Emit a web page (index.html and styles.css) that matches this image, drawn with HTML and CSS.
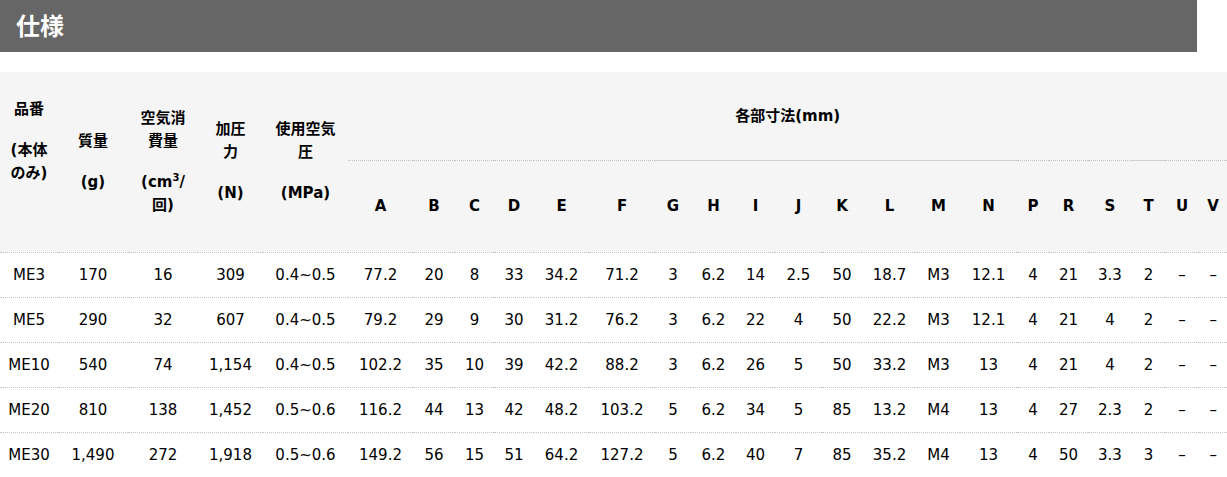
FILE: index.html
```html
<!DOCTYPE html>
<html lang="ja">
<head>
<meta charset="utf-8">
<title>仕様</title>
<link rel="stylesheet" href="styles.css">
</head>
<body>
<h2 class="title">仕様</h2>
<table class="spec">
  <colgroup>
    <col style="width:58px"><col style="width:70px"><col style="width:70px"><col style="width:65px"><col style="width:85px">
    <col style="width:65px"><col style="width:42px"><col style="width:39px"><col style="width:40px"><col style="width:55px">
    <col style="width:66px"><col style="width:36px"><col style="width:45px"><col style="width:39px"><col style="width:47px">
    <col style="width:40px"><col style="width:55px"><col style="width:43px"><col style="width:57px"><col style="width:32px">
    <col style="width:39px"><col style="width:44px"><col style="width:33px"><col style="width:34px"><col style="width:28px">
  </colgroup>
  <thead>
    <tr class="h1">
      <th rowspan="2" class="lead shift"><div class="nm">品番</div><div class="un">(本体<br>のみ)</div></th>
      <th rowspan="2" class="lead"><div class="nm">質量</div><div class="un">(g)</div></th>
      <th rowspan="2" class="lead"><div class="nm">空気消<br>費量</div><div class="un">(cm<sup>3</sup>/<br>回)</div></th>
      <th rowspan="2" class="lead"><div class="nm">加圧<br>力</div><div class="un">(N)</div></th>
      <th rowspan="2" class="lead"><div class="nm">使用空気<br>圧</div><div class="un">(MPa)</div></th>
      <th colspan="20" class="group">各部寸法(mm)</th>
    </tr>
    <tr class="h2">
      <th>A</th><th>B</th><th>C</th><th>D</th><th>E</th><th>F</th>
      <th class="solid">G</th><th class="solid">H</th><th class="solid">I</th><th class="solid">J</th>
      <th class="solid">K</th><th class="solid">L</th><th class="solid">M</th><th class="solid">N</th>
      <th>P</th><th>R</th><th>S</th><th class="solid">T</th><th>U</th><th>V</th>
    </tr>
  </thead>
  <tbody>
    <tr><td>ME3</td><td>170</td><td>16</td><td>309</td><td>0.4~0.5</td><td>77.2</td><td>20</td><td>8</td><td>33</td><td>34.2</td><td>71.2</td><td>3</td><td>6.2</td><td>14</td><td>2.5</td><td>50</td><td>18.7</td><td>M3</td><td>12.1</td><td>4</td><td>21</td><td>3.3</td><td>2</td><td>–</td><td>–</td></tr>
    <tr><td>ME5</td><td>290</td><td>32</td><td>607</td><td>0.4~0.5</td><td>79.2</td><td>29</td><td>9</td><td>30</td><td>31.2</td><td>76.2</td><td>3</td><td>6.2</td><td>22</td><td>4</td><td>50</td><td>22.2</td><td>M3</td><td>12.1</td><td>4</td><td>21</td><td>4</td><td>2</td><td>–</td><td>–</td></tr>
    <tr><td>ME10</td><td>540</td><td>74</td><td>1,154</td><td>0.4~0.5</td><td>102.2</td><td>35</td><td>10</td><td>39</td><td>42.2</td><td>88.2</td><td>3</td><td>6.2</td><td>26</td><td>5</td><td>50</td><td>33.2</td><td>M3</td><td>13</td><td>4</td><td>21</td><td>4</td><td>2</td><td>–</td><td>–</td></tr>
    <tr><td>ME20</td><td>810</td><td>138</td><td>1,452</td><td>0.5~0.6</td><td>116.2</td><td>44</td><td>13</td><td>42</td><td>48.2</td><td>103.2</td><td>5</td><td>6.2</td><td>34</td><td>5</td><td>85</td><td>13.2</td><td>M4</td><td>13</td><td>4</td><td>27</td><td>2.3</td><td>2</td><td>–</td><td>–</td></tr>
    <tr><td>ME30</td><td>1,490</td><td>272</td><td>1,918</td><td>0.5~0.6</td><td>149.2</td><td>56</td><td>15</td><td>51</td><td>64.2</td><td>127.2</td><td>5</td><td>6.2</td><td>40</td><td>7</td><td>85</td><td>35.2</td><td>M4</td><td>13</td><td>4</td><td>50</td><td>3.3</td><td>3</td><td>–</td><td>–</td></tr>
  </tbody>
</table>
</body>
</html>
```
FILE: styles.css
```css
html, body {
  margin: 0;
  padding: 0;
  background: #fff;
}
body {
  font-family: "DejaVu Sans", "Noto Sans CJK JP", sans-serif;
  font-size: 15px;
  color: #000;
}
.title {
  box-sizing: border-box;
  width: 1197px;
  height: 52px;
  margin: 0 0 20px 0;
  padding: 0 0 0 16px;
  background: #666666;
  color: #fff;
  font-family: "Noto Sans CJK JP", sans-serif;
  font-size: 24px;
  font-weight: 700;
  line-height: 50px;
}
.spec {
  width: 1227px;
  table-layout: fixed;
  border-collapse: collapse;
  border-spacing: 0;
}
.spec th, .spec td {
  padding: 0;
  text-align: center;
  white-space: nowrap;
}
.spec thead th {
  background: #f5f5f5;
  font-weight: 700;
  vertical-align: middle;
  border-bottom: 1px dotted #c4c4c4;
}
.spec .h1 { height: 88px; }
.spec .h2 { height: 92px; }
.spec .h2 th { border-top: 1px dotted #c4c4c4; }
.spec .h2 th.solid { border-top: 1px solid #cfcfcf; }
.spec .lead { line-height: 23px; }
.spec .lead .un { margin-top: 18px; }
.spec .lead.shift { padding-bottom: 40px; }
.spec .group { line-height: 20px; }
.spec sup {
  font-size: 10px;
  line-height: 0;
  vertical-align: 6px;
}
.spec tbody tr { height: 45px; }
.spec tbody td {
  border-bottom: 1px dotted #c4c4c4;
  vertical-align: middle;
  line-height: 20px;
}
```
